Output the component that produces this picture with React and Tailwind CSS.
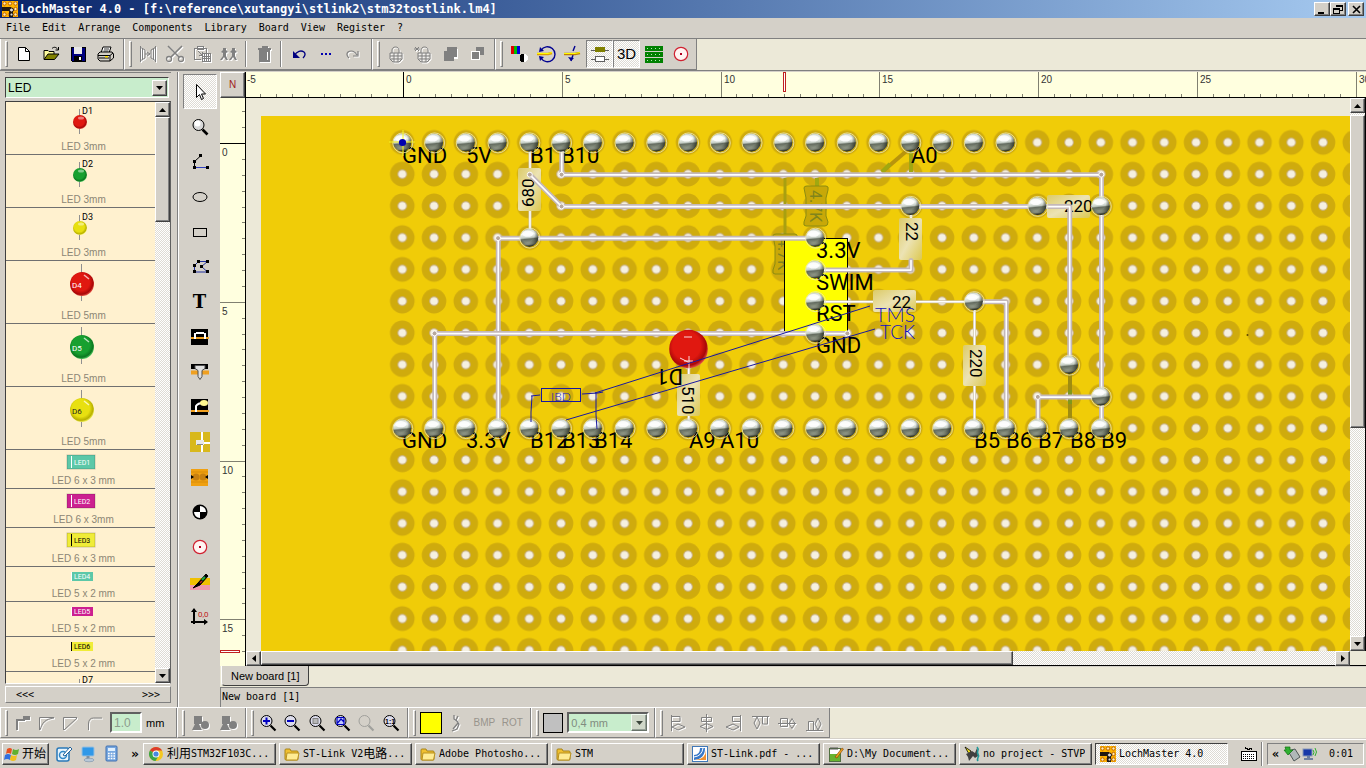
import React from "react";

const MONO = "font-['DejaVu_Sans_Mono','Noto_Sans_CJK_SC',monospace]";
const SANS = "font-['Liberation_Sans',Arial,sans-serif]";
const RAISED =
  "border border-t-white border-l-white border-r-[#404040] border-b-[#404040] bg-[#d4d0c8] shadow-[inset_-1px_-1px_#808080]";
const DITHER = "bg-[repeating-conic-gradient(#ffffff_0_25%,#dedbd4_0_50%)] bg-[length:2px_2px]";

function Icon({ children, size = 20, w, crisp = true }) {
  return (
    <svg
      width={w || size}
      height={size}
      viewBox={`0 0 ${w || size} ${size}`}
      fill="none"
      shapeRendering={crisp ? "crispEdges" : "auto"}
      aria-hidden="true"
      className="shrink-0"
    >
      {children}
    </svg>
  );
}

/* Disabled glyph: grey strokes with a white relief one pixel down and right. */
function Dim({ children, fill = false, size, w, crisp }) {
  return (
    <Icon size={size} w={w} crisp={crisp}>
      <g transform="translate(1 1)" stroke={fill ? "none" : "#fff"} fill={fill ? "#fff" : "none"}>
        {children}
      </g>
      <g stroke={fill ? "none" : "#808080"} fill={fill ? "#808080" : "none"}>{children}</g>
    </Icon>
  );
}

const icons = {
  New: (
    <Icon crisp={false}>
      <path d="M4.500 3.500h7l4 4v9h-11z" fill="#fff" stroke="#000" />
      <path d="M11.500 3.500v4h4" stroke="#000" />
    </Icon>
  ),
  Open: (
    <Icon crisp={false}>
      <path d="M3 15V6.500h4l1 1h5V10" fill="#fffb9c" stroke="#000" />
      <path d="M3 15.500L7 10h11l-4.500 5.500z" fill="#808000" stroke="#000" />
      <path d="M11 4.500c2-2 4-1.500 6 1M17.500 3v3h-3" stroke="#000" />
    </Icon>
  ),
  Save: (
    <Icon>
      <path d="M3 3h14v14H4l-1-1z" fill="#000080" stroke="#000" />
      <rect x="6" y="3" width="8" height="7" fill="#e8e8e8" />
      <rect x="6" y="12" width="8" height="5" fill="#000" />
      <rect x="11" y="13" width="2" height="3" fill="#fff" />
    </Icon>
  ),
  Print: (
    <Icon crisp={false}>
      <path d="M6 9l2-6h8l-2 6z" fill="#fff" stroke="#000" />
      <path d="M9 5h5M8.500 7h5" stroke="#000" strokeWidth=".8" />
      <path d="M3 10l2-2h12l1.500 2v4L15 17H5l-2-2z" fill="#d4d0c8" stroke="#000" />
      <path d="M3 11.500h12M15 11.500V17M15 11.500l3-2.500M4 14h10" stroke="#000" />
      <rect x="10" y="12" width="3" height="1.500" fill="#ffe000" />
    </Icon>
  ),
  Mirror: (
    <Dim crisp={false}>
      <path d="M2.500 2v16M2 3l5 3v8l-5 3M4.500 5v10M17.500 2v16M18 3l-5 3v8l5 3M15.500 5v10M7 10h5M9 8l3 2-3 2" />
    </Dim>
  ),
  Cut: (
    <Dim crisp={false}>
      <path d="M3 2l11 11M17 2L6 13" strokeWidth="1.600" />
      <circle cx="4" cy="15" r="2.500" strokeWidth="1.300" />
      <circle cx="16" cy="15" r="2.500" strokeWidth="1.300" />
    </Dim>
  ),
  Paste: (
    <Dim>
      <path d="M2 4h12v5M2 4v11h7M5 2h6v3H5zM6 7l4 4M10 8v3H7M10 9h8v8h-8zM12 10v7M14 10v7M16 10v7M10 12h8M10 14h8" />
    </Dim>
  ),
  Group: (
    <Dim fill crisp={false}>
      <path d="M4 4h3v2l2 2-2 1v3l2 4H7l-2-3-2 3H1l3-4V9L2 8l2-2zM13 4h3v2l2 2-2 1v3l2 4h-2l-2-3-2 3h-2l3-4V9l-2-1 2-2z" />
    </Dim>
  ),
  Delete: (
    <Dim>
      <path d="M4 5h13M8 3h5v2M5 7h11M6 7v10h9V7M8 8v8M10 8v8M12 8v8" strokeWidth="1.400" />
    </Dim>
  ),
  Undo: (
    <Icon crisp={false}>
      <path d="M5 12c3-5 7-6 10-4 2 2 1 4-1 6" stroke="#000080" strokeWidth="1.300" />
      <path d="M4 7v7h7z" fill="#000080" />
    </Icon>
  ),
  History: (
    <Icon>
      <path d="M5 9h2v2H5zM9 9h2v2H9zM13 9h2v2h-2z" fill="#0000b0" />
    </Icon>
  ),
  Redo: (
    <Dim crisp={false}>
      <path d="M6 14c-2-2-3-4-1-6 3-2 7-1 9 3M15 7v5h-5" strokeWidth="1.200" />
    </Dim>
  ),
  Lock: (
    <Dim crisp={false}>
      <path d="M6 9V6c0-4 7-4 7 0v3M4 9h12v6l-3 3H7l-3-3zM4 12h12M5 15h10M8 9v9M12 9v9" />
    </Dim>
  ),
  Unlock: (
    <Dim crisp={false}>
      <path d="M8 9V6c0-4 7-4 7 0v3M5 9h12v6l-3 3H8l-3-3zM5 12h12M6 15h10M9 9v9M13 9v9M2 3l4 4M6 3L2 7M1 5h6" />
    </Dim>
  ),
  Front: (
    <Icon>
      <path d="M7 4h10v10H7z" fill="#fff" transform="translate(1 1)" />
      <path d="M7 3h10v10h-3v4H4V7h3z" fill="#808080" />
    </Icon>
  ),
  Back: (
    <Icon>
      <path d="M9 3h8v8H9z" fill="#808080" />
      <path d="M4 7h8v8H4z" fill="#808080" stroke="#fff" />
    </Icon>
  ),
  Colors: (
    <Icon>
      <path d="M2 2h3v8H2z" fill="#e00000" />
      <path d="M5 2h3v8H5z" fill="#00c000" />
      <path d="M8 2h3v8H8z" fill="#0000e0" />
      <circle cx="15" cy="14" r="4" fill="#fff" />
      <path d="M15 9.500a4 4 0 0 0 0 9z" fill="#000" />
    </Icon>
  ),
  Rotate: (
    <Icon crisp={false}>
      <path d="M5 6.500A7.500 7.500 0 1 1 5 14" stroke="#000090" strokeWidth="1.400" />
      <path d="M3 8l5-1-4-4zM3 12l5 1-4 4z" fill="#000090" />
      <path d="M1 10h11l4-1" stroke="#e0a000" strokeWidth="2.600" />
      <path d="M1 9.500h11l4-1" stroke="#ff0" />
    </Icon>
  ),
  Flip: (
    <Icon crisp={false}>
      <path d="M12 2l-2 5M10 11l-2 6" stroke="#000090" strokeWidth="1.400" />
      <path d="M5 13l3 4 3-3z" fill="#000090" />
      <path d="M1 10h11l5-1" stroke="#c08000" strokeWidth="2.600" />
      <path d="M1 9.500h11l5-1" stroke="#ff0" />
    </Icon>
  ),
  Parts: (
    <Icon>
      <path d="M1 6h18M1 15h18" stroke="#606060" />
      <rect x="5" y="3" width="10" height="5" fill="#808000" />
      <rect x="5.500" y="12.500" width="9" height="5" fill="#fff" stroke="#606060" />
    </Icon>
  ),
  Copper: (
    <Icon>
      <path d="M1 2h18v5H1zM1 8h18v5H1zM1 14h18v5H1z" fill="#008000" />
      <path d="M3 4h14M3 10h14M3 16h14" stroke="#b8e8b8" strokeDasharray="1 3" />
    </Icon>
  ),
  Target: (
    <Icon crisp={false}>
      <circle cx="10" cy="10" r="6.700" fill="#fff4f2" stroke="#d02030" strokeWidth="1.200" />
      <rect x="9" y="9" width="2" height="2" fill="#b00020" />
    </Icon>
  ),
};

function ToolButton({ name, label, pressed, children }) {
  return (
    <button
      type="button"
      aria-label={label || name}
      className={
        "flex h-7 w-[27px] items-center justify-center " +
        (pressed
          ? "border border-b-white border-l-[#808080] border-r-white border-t-[#808080] " + DITHER
          : "")
      }
    >
      {children || icons[name]}
    </button>
  );
}

function ToolGroup({ children, className = "pr-1" }) {
  return (
    <div
      className={
        "flex items-center border-b border-l border-r border-b-[#808080] border-l-white border-r-[#808080] bg-[#d4d0c8] pl-1 " +
        className
      }
    >
      <span className="mr-0.5 h-[26px] w-[3px] border border-b-[#808080] border-l-white border-r-[#808080] border-t-white" />
      {children}
    </div>
  );
}

function Divider() {
  return <span className="mx-[3px] h-[26px] w-0.5 border-l border-r border-l-[#808080] border-r-white" />;
}

function Arrow({ dir }) {
  const d = {
    up: "M0 4h7L3.500 0z",
    down: "M0 0h7L3.500 4z",
    left: "M4 0v7L0 3.500z",
    right: "M0 0v7l4-3.500z",
  }[dir];
  const tall = dir === "left" || dir === "right";
  return (
    <svg width={tall ? 4 : 7} height={tall ? 7 : 4} aria-hidden="true">
      <path d={d} fill="#000" />
    </svg>
  );
}

function ScrollButton({ dir }) {
  return (
    <button
      type="button"
      aria-label={`Scroll ${dir}`}
      className={`flex h-[15px] w-[15px] shrink-0 items-center justify-center ${RAISED}`}
    >
      <Arrow dir={dir} />
    </button>
  );
}

function TitleBar() {
  const box = `flex h-[14px] w-4 items-center justify-center ${RAISED}`;
  return (
    <header className="flex h-[18px] shrink-0 items-center bg-gradient-to-r from-[#0a246a] to-[#a6caf0] pl-0.5 pr-0.5">
      <BoardLogo />
      <h1 className={`ml-0.5 flex-1 truncate text-[12px] font-bold leading-4 text-white ${MONO}`}>
        LochMaster 4.0 - [f:\reference\xutangyi\stlink2\stm32tostlink.lm4]
      </h1>
      <button type="button" aria-label="Minimize" className={box}>
        <svg width="10" height="9"><path d="M1 7h6v2H1z" /></svg>
      </button>
      <button type="button" aria-label="Restore" className={box}>
        <svg width="10" height="10" fill="none" stroke="#000" shapeRendering="crispEdges">
          <path d="M3.500 3V1.500h6v5H7M3 2h7M.500 4.500h6v5h-6zM0 5h7" />
        </svg>
      </button>
      <button type="button" aria-label="Close" className={`ml-0.5 ${box}`}>
        <svg width="9" height="9" stroke="#000" strokeWidth="1.600"><path d="M1 1l7 7M8 1L1 8" /></svg>
      </button>
    </header>
  );
}

function BoardLogo() {
  return (
    <svg width="16" height="16" viewBox="0 0 16 16" aria-hidden="true" className="shrink-0">
      <rect width="16" height="16" fill="#ffb400" />
      {[2.5, 8, 13.5].map((x) =>
        [2.5, 8, 13.5].map((y) => (
          <circle key={`${x}-${y}`} cx={x} cy={y} r="1.700" fill="#fff0b0" stroke="#c06000" />
        ))
      )}
      <path d="M0 6h9v4H0zM7 8h4v8H7z" fill="#201810" />
      <circle cx="9.500" cy="9" r="2" fill="#ddd" stroke="#201810" />
      <circle cx="9.500" cy="13.500" r="1.500" fill="#ddd" stroke="#201810" />
    </svg>
  );
}

function MenuBar() {
  const items = ["File", "Edit", "Arrange", "Components", "Library", "Board", "View", "Register", "?"];
  return (
    <nav className={`flex h-5 shrink-0 items-center gap-3 bg-[#d4d0c8] pl-1.5 text-[10px] leading-4 ${MONO}`}>
      {items.map((i) => (
        <button type="button" key={i}>{i}</button>
      ))}
    </nav>
  );
}

function TopToolbar() {
  return (
    <div className="flex h-[33px] shrink-0 border-b border-t border-b-[#808080] border-t-[#808080] bg-[#ece9d8]">
      <ToolGroup className="pr-[5px]">
        {["New", "Open", "Save", "Print"].map((n) => <ToolButton key={n} name={n} />)}
      </ToolGroup>
      <ToolGroup className="pr-[5px]">
        {["Mirror", "Cut", "Paste", "Group"].map((n) => <ToolButton key={n} name={n} />)}
        <Divider />
        <ToolButton name="Delete" />
        <Divider />
        {["Undo", "History", "Redo"].map((n) => <ToolButton key={n} name={n} />)}
      </ToolGroup>
      <ToolGroup className="pr-1">
        {["Lock", "Unlock", "Front", "Back"].map((n) => <ToolButton key={n} name={n} />)}
      </ToolGroup>
      <ToolGroup className="pr-0.5">
        {["Colors", "Rotate", "Flip"].map((n) => <ToolButton key={n} name={n} />)}
        <ToolButton name="Parts" pressed />
        <ToolButton name="3D" pressed>
          <span className={`text-[15px] leading-5 ${SANS}`}>3D</span>
        </ToolButton>
        <ToolButton name="Copper" />
        <ToolButton name="Target" />
      </ToolGroup>
    </div>
  );
}

const leds = [
  { kind: "3", tag: "D1", caption: "LED 3mm", fill: "red" },
  { kind: "3", tag: "D2", caption: "LED 3mm", fill: "green" },
  { kind: "3", tag: "D3", caption: "LED 3mm", fill: "yellow" },
  { kind: "5", tag: "D4", caption: "LED 5mm", fill: "red", ink: "#fff" },
  { kind: "5", tag: "D5", caption: "LED 5mm", fill: "green", ink: "#fff" },
  { kind: "5", tag: "D6", caption: "LED 5mm", fill: "yellow", ink: "#222" },
  { kind: "63", tag: "LED1", caption: "LED 6 x 3 mm", color: "#5cc8a8", ink: "#fff" },
  { kind: "63", tag: "LED2", caption: "LED 6 x 3mm", color: "#cc2090", ink: "#fff" },
  { kind: "63", tag: "LED3", caption: "LED 6 x 3 mm", color: "#f0ec38", ink: "#000" },
  { kind: "52", tag: "LED4", caption: "LED 5 x 2 mm", color: "#5cc8a8", ink: "#fff" },
  { kind: "52", tag: "LED5", caption: "LED 5 x 2 mm", color: "#cc2090", ink: "#fff" },
  { kind: "52", tag: "LED6", caption: "LED 5 x 2 mm", color: "#f0ec38", ink: "#000" },
];

const rowHeight = { 3: "h-[53px]", 5: "h-[63px]", 63: "h-[39px]", 52: "h-[35px]" };
const artHeight = { 3: 38, 5: 48, 63: 24, 52: 20 };

function LedArt({ led }) {
  const h = artHeight[led.kind];
  const font = "Roboto,'Liberation Sans',sans-serif";
  return (
    <svg width="60" height={h} className="shrink-0" aria-hidden="true">
      {led.kind === "3" && (
        <>
          <path d="M28.500 7v25" stroke="#909090" />
          <circle cx="29" cy="20" r="7" fill={`url(#led-${led.fill})`} />
          <ellipse cx="30" cy="16" rx="3" ry="1.500" fill="#fff" opacity=".45" />
          <text x="31" y="12" fontSize="9" fontFamily={font}>{led.tag}</text>
        </>
      )}
      {led.kind === "5" && (
        <>
          <path d="M30.500 3v37" stroke="#909090" />
          <circle cx="31" cy="23" r="12" fill={`url(#led-${led.fill})`} />
          <path d="M33 14l5 4" stroke="#fff" strokeWidth="1.500" opacity=".7" />
          <text x="21" y="27" fontSize="8" fill={led.ink} fontFamily={font}>{led.tag}</text>
        </>
      )}
      {led.kind === "63" && (
        <>
          <rect x="16" y="5" width="28" height="14" fill={led.color} stroke="#00000030" />
          <path d="M20.500 6v12" stroke={led.ink} />
          <text x="23" y="15" fontSize="7" fill={led.ink} fontFamily={font}>{led.tag}</text>
        </>
      )}
      {led.kind === "52" && (
        <>
          <rect x="20" y="5" width="22" height="9" fill={led.color} />
          <path d="M20.500 5v9" stroke={led.ink} />
          <text x="23" y="12" fontSize="7" fill={led.ink} fontFamily={font}>{led.tag}</text>
        </>
      )}
    </svg>
  );
}

function LibraryPanel() {
  return (
    <aside className="flex w-[179px] shrink-0 flex-col border-r border-r-white bg-[#d4d0c8] pr-1 shadow-[inset_-1px_0_#808080]">
      <div className="ml-[5px] mr-[3px] flex min-h-0 flex-1 flex-col border-t border-t-[#808080] pt-1">
        <div className="mr-0.5 flex h-[21px] items-center border border-b-white border-l-[#404040] border-r-white border-t-[#404040] bg-[#c8edcc] pr-px">
          <select
            aria-label="Library"
            className={`h-full min-w-0 flex-1 appearance-none bg-transparent pl-0.5 text-[12px] leading-4 outline-none ${SANS}`}
          >
            <option>LED</option>
          </select>
          <span className={`flex h-4 w-[15px] items-center justify-center ${RAISED}`}>
            <Arrow dir="down" />
          </span>
        </div>
        <div className="mt-[3px] flex min-h-0 flex-1 border border-b-white border-l-[#404040] border-r-[#606060] border-t-[#404040]">
          <ul className="min-w-0 flex-1 overflow-hidden bg-[#fff1cf]">
            {leds.map((led) => (
              <li
                key={led.tag}
                className={`flex flex-col items-center justify-between border-b border-b-[#707070] ${rowHeight[led.kind]}`}
              >
                <LedArt led={led} />
                <span className={`pl-1.5 text-[10px] leading-[14px] text-[#8c8675] ${SANS}`}>{led.caption}</span>
              </li>
            ))}
            <li className="flex flex-col items-center">
              <svg width="60" height="24" aria-hidden="true">
                <path d="M28.500 7v10" stroke="#909090" />
                <text x="31" y="11" fontSize="9" fontFamily="Roboto,'Liberation Sans',sans-serif">D7</text>
              </svg>
            </li>
          </ul>
          <div className={`flex w-[15px] flex-col ${DITHER}`}>
            <ScrollButton dir="up" />
            <div className={`h-[105px] ${RAISED}`} />
            <div className="flex-1" />
            <ScrollButton dir="down" />
          </div>
        </div>
        <div className={`mb-1 mt-0.5 flex h-[17px] shrink-0 items-center justify-between border border-b-[#808080] border-l-white border-r-[#808080] border-t-white px-2.5 text-[10px] leading-3 ${MONO}`}>
          <button type="button">&lt;&lt;&lt;</button>
          <button type="button">&gt;&gt;&gt;</button>
        </div>
      </div>
    </aside>
  );
}

const dot = (x, y) => <rect key={`${x},${y}`} x={x - 1.5} y={y - 1.5} width="3" height="3" fill="#000" />;

const palette = [
  ["Select", <Icon crisp={false}><path d="M6.500 2.500v13l3-3 2 5 2-1-2-4.500h4z" fill="#fff" stroke="#000" /></Icon>],
  ["Zoom", (
    <Icon crisp={false}>
      <circle cx="8.500" cy="8" r="5.500" fill="#d8d8d8" stroke="#000" />
      <circle cx="7.500" cy="6.500" r="3" fill="#fff" />
      <path d="M12.500 12.500l5 5" stroke="#000" strokeWidth="2.600" />
    </Icon>
  )],
  ["Polyline", (
    <Icon crisp={false}>
      <path d="M10.500 4L4.500 9.500V16" stroke="#000" />
      <path d="M5 15.500h12" stroke="#3040c0" />
      {dot(10.5, 3.5)}{dot(4.5, 9.5)}{dot(4.5, 15.5)}{dot(17.5, 15.5)}
    </Icon>
  )],
  ["Ellipse", <Icon crisp={false}><ellipse cx="10" cy="10" rx="7" ry="4.500" stroke="#000" /></Icon>],
  ["Rectangle", <Icon><rect x="3.500" y="6.500" width="13" height="8" stroke="#000" /></Icon>],
  ["Polygon", (
    <Icon crisp={false}>
      <path d="M8.500 4.500h9l-6 5 6 5.500h-13V8.500z" stroke="#2030a0" />
      {dot(8.5, 4.5)}{dot(17.5, 4.5)}{dot(11.5, 9.5)}{dot(17.5, 14.5)}{dot(4.5, 14.5)}{dot(4.5, 8.5)}
    </Icon>
  )],
  ["Text", null],
  ["Bridge", (
    <Icon>
      <path d="M1 2h17v16H1z" fill="#000" />
      <path d="M1 11h18" stroke="#f0a020" strokeWidth="2" />
      <path d="M5 12V7l2-1h6l2 1v5" stroke="#fff" strokeWidth="2" />
    </Icon>
  )],
  ["Pin", (
    <Icon crisp={false}>
      <path d="M1 2h17v5H1z" fill="#000" />
      <path d="M1 10.500h18" stroke="#f0a020" strokeWidth="4" />
      <path d="M5 3.500h10v3l-3 2v6l-2 3-2-3v-6l-3-2z" fill="#e0e0e0" stroke="#505050" />
    </Icon>
  )],
  ["Solder", (
    <Icon crisp={false}>
      <path d="M1 2h17v16H1z" fill="#000" />
      <path d="M1 14h18" stroke="#f0a020" strokeWidth="2" />
      <path d="M6 15V9c2-3 5-3 7-3" stroke="#fff" strokeWidth="2" />
      <ellipse cx="14" cy="6" rx="4" ry="3" fill="#fff890" />
    </Icon>
  )],
  ["Cut wire", (
    <Icon>
      <rect width="20" height="20" fill="#d8b81c" />
      <path d="M12 0v20M12 11h8" stroke="#fff" strokeWidth="2" />
      <path d="M6 8h8v5H6z" fill="#e8e8e8" />
      <path d="M7 12h6" stroke="#888" />
    </Icon>
  )],
  ["Track cut", (
    <Icon crisp={false}>
      <rect x="1" y="2" width="17" height="17" fill="#f0a010" />
      <circle cx="6" cy="10" r="3.500" fill="#c88010" />
      <circle cx="13" cy="10" r="3.500" fill="#c88010" />
      <path d="M1 5h17M1 15h17" stroke="#d88c08" />
      <path d="M1 8l3 2-3 2zM18 8l-3 2 3 2z" fill="#000" />
    </Icon>
  )],
  ["Mark", (
    <Icon crisp={false}>
      <circle cx="10" cy="10" r="7.500" fill="#000" />
      <path d="M10 10V4a6 6 0 0 1 6 6zM10 10v6a6 6 0 0 1-6-6z" fill="#fff" />
    </Icon>
  )],
  ["Drill", icons.Target],
  ["Probe", (
    <Icon crisp={false}>
      <path d="M0 6h20v7H0z" fill="#f0c000" />
      <path d="M0 13h20v5H0z" fill="#f098a8" />
      <path d="M3 16L8 11 16 2l2 2-8 9z" fill="#000" stroke="#000" />
      <path d="M12 8l3-3" stroke="#20b040" strokeWidth="2" />
      <path d="M10 11l2-2" stroke="#c02020" strokeWidth="1.500" />
    </Icon>
  )],
  ["Origin", (
    <Icon crisp={false}>
      <path d="M4 2v15M1 15h16" stroke="#000" strokeWidth="2" />
      <path d="M1 5l3-4 3 4zM14 12l4 3-4 3z" fill="#000" />
      <text x="8" y="10" fontSize="8" fill="#c02020" fontFamily="Roboto,'Liberation Sans',sans-serif">0,0</text>
    </Icon>
  )],
];

function Palette() {
  return (
    <div className="flex w-[41px] shrink-0 flex-col items-center bg-[#d4d0c8] pt-0.5">
      {palette.map(([name, art], i) => (
        <button
          type="button"
          key={name}
          aria-label={name}
          className={
            "flex h-[35px] w-[34px] shrink-0 items-center justify-center " +
            (i === 0 ? "border border-b-white border-l-[#808080] border-r-white border-t-[#808080] " + DITHER : "")
          }
        >
          {art || (
            <span className="font-['DejaVu_Serif','Liberation_Serif',serif] text-[18px] font-bold leading-5">T</span>
          )}
        </button>
      ))}
    </div>
  );
}

const PITCH = 31.75;
const colX = (c) => 402.3 + c * PITCH;
const rowY = (r) => 142.4 + r * PITCH;

function TopRuler() {
  const ticks = Array.from({ length: 120 }, (_, i) => i);
  return (
    <svg className="h-[26px] min-w-0 flex-1 border-b border-b-black bg-[#ffffdf]" shapeRendering="crispEdges">
      {ticks.map((i) => {
        const x = Math.round(157 - 5 * PITCH + (i * PITCH) / 2);
        const major = i % 10 === 0;
        return (
          <g key={i}>
            <path d={`M${x}.5 ${major ? 0 : 22}V26`} stroke={i === 10 ? "#000" : "#808070"} />
            {major && (
              <text x={x + 3} y="11" fontSize="10" fill="#333" fontFamily="'Liberation Sans',sans-serif">
                {i / 2 - 5}
              </text>
            )}
          </g>
        );
      })}
      <rect x="537.5" y="0.500" width="2" height="19" fill="#fff" stroke="#c02020" />
    </svg>
  );
}

function SideRuler() {
  const ticks = Array.from({ length: 50 }, (_, i) => i - 2);
  return (
    <svg className="w-[26px] shrink-0 border-r border-r-black bg-[#ffffdf]" shapeRendering="crispEdges">
      {ticks.map((i) => {
        const y = Math.round(45 + (i * PITCH) / 2);
        const major = i >= 0 && i % 10 === 0;
        return (
          <g key={i}>
            <path d={`M${major ? 0 : 22} ${y}.5H26`} stroke={i === 0 ? "#000" : "#808070"} />
            {major && (
              <text x="2" y={y + 13} fontSize="10" fill="#333" fontFamily="'Liberation Sans',sans-serif">
                {i / 2}
              </text>
            )}
          </g>
        );
      })}
      <rect x="0.500" y="552.5" width="19" height="2" fill="#fff" stroke="#c02020" />
    </svg>
  );
}

const wires = [
  [[5, 0], [5, 1], [22, 1], [22, 9]],
  [[4, 1], [5, 2], [21, 2], [21, 7]],
  [[3, 9], [3, 3], [13, 3]],
  [[1, 9], [1, 6], [14, 6]],
  [[13, 4], [16, 4], [16, 3.7]],
  [[18, 5], [19, 5], [19, 9]],
  [[22, 8], [20, 8], [20, 9]],
];
const leads = [
  [[4, 0], [4, 3]],
  [[16, 2], [16, 4]],
  [[13, 5], [18, 5]],
  [[18, 5], [18, 9]],
  [[20, 2], [22, 2]],
  [[9, 7], [9, 9]],
];
const joints = [
  ...Array.from({ length: 20 }, (_, c) => [c, 0]),
  ...Array.from({ length: 23 }, (_, c) => [c, 9]),
  [4, 3], [13, 3], [13, 4], [13, 5], [13, 6], [16, 2], [20, 2], [22, 2], [18, 5], [21, 7], [22, 8],
];
const eyelets = [[5, 1], [4, 1], [5, 2], [22, 1], [20, 8], [14, 6], [3, 3], [1, 6]];
const labels = [
  ["GND", 402, 163], ["5V", 466, 163], ["B11", 530, 163], ["B10", 561, 163], ["A0", 911, 163],
  ["GND", 402, 448], ["3.3V", 466, 448], ["B12", 530, 448], ["B13", 562, 448], ["B14", 594, 448],
  ["A9", 689, 448], ["A10", 720, 448], ["B5", 974, 448], ["B6", 1006, 448], ["B7", 1038, 448],
  ["B8", 1070, 448], ["B9", 1101, 448],
  ["3.3V", 816, 258], ["SWIM", 816, 290], ["RST", 816, 321], ["GND", 816, 353],
];
const resistors = [
  { x: 518, y: 168, w: 23, h: 43, value: "680", tx: 534, ty: 207, turn: -90 },
  { x: 899, y: 218, w: 23, h: 42, value: "22", tx: 906, ty: 222, turn: 90 },
  { x: 873, y: 290, w: 43, h: 22, value: "22", tx: 892, ty: 308, turn: 0 },
  { x: 963, y: 345, w: 23, h: 41, value: "220", tx: 970, ty: 349, turn: 90 },
  { x: 1047, y: 195, w: 43, h: 23, value: "220", tx: 1064, ty: 212, turn: 0 },
  { x: 677, y: 374, w: 23, h: 42, value: "510", tx: 682, ty: 386, turn: 90 },
];
const toPath = (pts) => "M" + pts.map(([c, r]) => `${colX(c) + 0.7} ${rowY(r) + 0.7}`).join("L");

function BoardDrawing() {
  const face = "Roboto,'Liberation Sans',sans-serif";
  return (
    <svg className="min-w-0 flex-1 bg-[#ece9d8]" role="img" aria-label="Stripboard layout">
      <defs>
        <pattern id="holes" x={colX(0) - PITCH / 2} y={rowY(0) - PITCH / 2} width={PITCH} height={PITCH} patternUnits="userSpaceOnUse">
          <circle cx={PITCH / 2} cy={PITCH / 2} r="12.300" fill="#cfab0d" />
          <circle cx={PITCH / 2} cy={PITCH / 2} r="4.300" fill="#f5f0e0" stroke="#c8b088" />
        </pattern>
        <linearGradient id="ball" x1=".4" y1="0" x2=".5" y2="1">
          <stop offset="0" stopColor="#c8d0c8" />
          <stop offset=".3" stopColor="#f4f8f4" />
          <stop offset=".5" stopColor="#c4ccc4" />
          <stop offset=".58" stopColor="#646c60" />
          <stop offset=".72" stopColor="#808878" />
          <stop offset=".88" stopColor="#c0c8b8" />
          <stop offset="1" stopColor="#343828" />
        </linearGradient>
        <radialGradient id="shade" cx=".38" cy=".35" r=".66">
          <stop offset=".6" stopColor="#202418" stopOpacity="0" />
          <stop offset="1" stopColor="#202418" stopOpacity=".75" />
        </radialGradient>
        <linearGradient id="body" x1="0" y1="0" x2="1" y2="1">
          <stop offset="0" stopColor="#dccb68" />
          <stop offset=".5" stopColor="#ece3b4" />
          <stop offset="1" stopColor="#dcc850" />
        </linearGradient>
        <g id="joint">
          <circle cx=".5" cy=".5" r="10" fill="none" stroke="#ece8b8" strokeWidth=".8" />
          <circle r="9" fill="url(#ball)" />
          <ellipse cx="-1.500" cy="-4" rx="5.500" ry="3.200" fill="#fff" opacity=".85" />
          <circle r="9" fill="url(#shade)" />
        </g>
      </defs>
      <g transform="translate(-246 -98)">
        <rect x="261" y="116" width="3000" height="3000" fill="#f0cc08" />
        <rect x={colX(0) - PITCH / 2} y={rowY(0) - PITCH / 2} width="3000" height="3000" fill="url(#holes)" />

        <g fill="none" strokeWidth="4">
          <path d="M910 148L882 172" stroke="#b8940c" />
          <path d="M882 172l8-8M911 150v22M817 178v10" stroke="#a0a810" />
          <path d="M785 178v60" stroke="#a8a010" strokeWidth="3" />
          <path d="M1070 372v52" stroke="#a08c10" />
          <path d="M1070 390v14" stroke="#80981c" />
        </g>
        <g fill="#c8a808" stroke="#8c8c10">
          <path d="M804 188q0-2 3-2h19q3 0 2 4l-2 8v18l2 6q0 4-3 4h-19q-3 0-2-4l2-6v-18z" />
          <path d="M773 236q0-2 3-2h19q3 0 2 4l-2 8v18l2 6q0 4-3 4h-19q-3 0-2-4l2-6v-18z" />
        </g>
        <g fontFamily={face} fontSize="16" fill="#80841c">
          <text transform="translate(810 190) rotate(90)">4.7K</text>
          <text transform="translate(778 238) rotate(90)">4.7K</text>
        </g>

        <rect x="784.5" y="238.500" width="63" height="94" fill="#ffff00" stroke="#000" />

        {leads.map((p, i) => (
          <g key={i} fill="none">
            <path d={toPath(p)} stroke="#d0c4a8" strokeWidth="3" />
            <path d={toPath(p)} stroke="#fff" strokeWidth="1.500" />
          </g>
        ))}
        {resistors.map((r) => (
          <g key={`${r.x}-${r.y}`}>
            <rect x={r.x} y={r.y} width={r.w} height={r.h} rx="2" fill="url(#body)" />
            <text
              transform={`translate(${r.tx} ${r.ty}) rotate(${r.turn})`}
              fontFamily={face}
              fontSize="17"
            >
              {r.value}
            </text>
          </g>
        ))}
        <g fontFamily={face} fontSize="22">
          {labels.map(([t, x, y]) => (
            <text key={`${t}${x}${y}`} x={x} y={y}>{t}</text>
          ))}
        </g>

        {wires.map((p, i) => (
          <g key={i} fill="none" strokeLinejoin="round" strokeLinecap="round">
            <path d={toPath(p)} stroke="#c4b8b8" strokeWidth="5" />
            <path d={toPath(p)} stroke="#fff" strokeWidth="1.600" />
          </g>
        ))}
        {eyelets.map(([c, r]) => (
          <circle key={`${c},${r}`} cx={colX(c) + 0.5} cy={rowY(r) + 0.5} r="2.500" fill="#b8a89c" stroke="#fff" />
        ))}
        {joints.map(([c, r]) => (
          <use key={`${c},${r}`} href="#joint" x={colX(c)} y={rowY(r)} />
        ))}

        <circle cx="688.500" cy="349" r="19.300" fill="url(#led-red)" />
        <path d="M684 337h8M680 358l8 4M689 356v12M684 361h9" stroke="#fff" opacity=".85" fill="none" />
        <text transform="translate(683 369) rotate(180)" fontFamily={face} fontSize="22">D1</text>

        <path d="M389 142h26M403 130v26" stroke="#f8f820" />
        <circle cx="402.500" cy="142.500" r="3.600" fill="#0000b0" />

        <g fill="none" stroke="#1818a0">
          <rect x="541.500" y="388.500" width="39" height="13" />
          <path d="M582 394l16-1 5-1M595 393L870 306M566 420L875 329M540 395l-9 1M532 396l-1 16v10M596 392v23l1 14" />
        </g>
        <g fill="#1010c0" fontFamily="Lato,'Liberation Sans',sans-serif" fontWeight="300">
          <text x="551" y="401" fontSize="12">IBD</text>
          <text x="875" y="322" fontSize="20">TMS</text>
          <text x="880" y="339" fontSize="19">TCK</text>
        </g>
        <circle cx="1247.500" cy="335" r="1" fill="#604800" />
      </g>
    </svg>
  );
}

function Workspace() {
  return (
    <main className="flex min-w-0 flex-1 flex-col bg-[#ece9d8]">
      <div className="flex shrink-0">
        <button
          type="button"
          className={`w-[25px] shrink-0 text-[10px] leading-4 text-[#a02020] ${RAISED} ${SANS}`}
        >
          N
        </button>
        <span className="w-px bg-black" />
        <TopRuler />
      </div>
      <div className="flex min-h-0 flex-1">
        <SideRuler />
        <div className="flex min-w-0 flex-1 flex-col border-b border-b-black">
          <div className="flex min-h-0 flex-1">
            <BoardDrawing />
            <div className={`flex w-4 shrink-0 flex-col border-r border-r-black ${DITHER}`}>
              <ScrollButton dir="up" />
              <div className="flex min-h-0 flex-1 flex-col pt-0.5">
                <div className={`h-[60%] ${RAISED}`} />
              </div>
              <ScrollButton dir="down" />
            </div>
          </div>
          <div className={`mr-4 flex h-[14px] shrink-0 items-center ${DITHER}`}>
            <ScrollButton dir="left" />
            <div className="flex h-full flex-1">
              <div className={`w-[70%] ${RAISED}`} />
            </div>
            <ScrollButton dir="right" />
          </div>
        </div>
      </div>
      <div className="flex h-[21px] shrink-0 items-start">
        <button
          type="button"
          className={`ml-px h-5 rounded-b-sm border border-t-0 border-b-[#404040] border-l-white border-r-[#404040] bg-[#d4d0c8] px-[9px] text-[11px] leading-[20px] ${SANS}`}
        >
          New board [1]
        </button>
        <span className="h-px flex-1 bg-[#d4d0c8]" />
      </div>
      <div className={`h-5 shrink-0 border-l border-t border-l-[#808080] border-t-[#808080] bg-[#d4d0c8] pl-px text-[10px] leading-[18px] ${MONO}`}>
        New board [1]
      </div>
    </main>
  );
}

function ZoomIcon({ ring = "#000", lens = "#dcdcec", children }) {
  return (
    <Icon crisp={false}>
      <circle cx="8.500" cy="8" r="5.500" fill={lens} stroke={ring} />
      <path d="M12.500 12.500l5 5" stroke={ring} strokeWidth="2.200" />
      {children}
    </Icon>
  );
}

function Slot({ label, width = "w-6", children }) {
  return (
    <button type="button" aria-label={label} className={`flex h-7 items-center justify-center ${width}`}>
      {children}
    </button>
  );
}

function BottomToolbar() {
  const aligns = {
    "Align left": "M2.500 2v16M3 3.500h8v5H3M3 14l6-3 7 3-7 3z",
    "Align center": "M10.500 1v18M5.500 4.500h10v4h-10zM4 13.500l6.500-3 6.500 3-6.500 3z",
    "Align right": "M17.500 2v16M9 3.500h8M9.500 3.500v5H17M3 14l7-3 6 3-6 3z",
    "Align top": "M2 3.500h17M4 10l3-6 3 6-3 6zM12.500 4v7h5V4",
    "Align middle": "M1 10.500h18M3.500 5.500h7v8h-7zM12 10.500l3-5 3 5-3 5z",
    "Align bottom": "M2 17.500h17M4.500 17V8.500h5V17M11 11l3-6 3 6-3 6z",
  };
  return (
    <div className="flex h-[31px] shrink-0 border-t border-t-white bg-[#ece9d8]">
      <ToolGroup className="pr-3">
        <Slot label="Right angle">
          <Dim fill><path d="M4 6h9v2H6v9H4zM11 3h7v4h-7z" /></Dim>
        </Slot>
        <Slot label="Large arc">
          <Dim crisp={false}><path d="M3.500 17V4.500H18M4 17C6 10 9 6 18 5" /></Dim>
        </Slot>
        <Slot label="Diagonal">
          <Dim crisp={false}><path d="M3.500 17V4.500H17M4 17L17 5" /></Dim>
        </Slot>
        <Slot label="Small arc">
          <Dim crisp={false}><path d="M4.500 17v-6q0-6 5-6H18" /></Dim>
        </Slot>
        <input
          aria-label="Width"
          defaultValue="1.0"
          className={`ml-1 h-[21px] w-8 border-2 border-b-white border-l-[#606060] border-r-white border-t-[#606060] bg-[#c8edcc] px-0.5 text-[12px] leading-4 text-[#8c9c8c] outline-none ${SANS}`}
        />
        <span className={`ml-1 text-[11px] leading-4 ${SANS}`}>mm</span>
      </ToolGroup>
      <ToolGroup className="pr-0.5">
        {["Group parts", "Ungroup parts"].map((n) => (
          <Slot key={n} label={n} width="w-7">
            <Dim fill crisp={false}><path d="M3 3h8v8H8l3 6H1l3-6H3z" /><circle cx="14" cy="12" r="4" /></Dim>
          </Slot>
        ))}
      </ToolGroup>
      <ToolGroup className="pr-1">
        <Slot label="Zoom in"><ZoomIcon><path d="M5 8h7M8.500 4.500v7" stroke="#0000c0" strokeWidth="2" /></ZoomIcon></Slot>
        <Slot label="Zoom out"><ZoomIcon><path d="M5 8h7" stroke="#0000c0" strokeWidth="2" /></ZoomIcon></Slot>
        <Slot label="Zoom selection" width="w-[25px]"><ZoomIcon><rect x="6" y="5.500" width="5" height="5" fill="#b8b8b8" stroke="#808080" /></ZoomIcon></Slot>
        <Slot label="Zoom board" width="w-[25px]"><ZoomIcon><path d="M5 4.500h7v7H5zM5.500 10l3.500-4 3 3" fill="#c0c8ff" stroke="#0000c0" strokeWidth="1.200" /></ZoomIcon></Slot>
        <Slot label="Zoom previous"><ZoomIcon ring="#a0a09c" lens="#d4d0c8" /></Slot>
        <Slot label="Zoom one to one" width="w-[25px]">
          <ZoomIcon>
            <text x="4" y="11" fontSize="7" fontWeight="bold" fill="#000" fontFamily="'Liberation Sans',sans-serif">1:1</text>
          </ZoomIcon>
        </Slot>
      </ToolGroup>
      <ToolGroup className="pr-1">
        <button type="button" aria-label="Fill colour" className="ml-0.5 h-[22px] w-[22px] border border-black bg-[#ffff00]" />
        <Slot label="Brush" width="w-7"><Dim crisp={false}><path d="M8 2v4l4 3M12 3l-2 4M10 7l3 4-2 5-5 2M7 16l5-6" strokeWidth="1.300" /></Dim></Slot>
        <button type="button" className={`w-7 text-[10px] leading-4 text-[#98948c] ${SANS}`}>BMP</button>
        <button type="button" className={`w-7 text-[10px] leading-4 text-[#98948c] ${SANS}`}>ROT</button>
      </ToolGroup>
      <ToolGroup className="pr-[5px]">
        <button type="button" aria-label="Line colour" className="ml-0.5 h-5 w-5 border border-black bg-[#c0c0c0]" />
        <div className="ml-1 flex h-[21px] w-[82px] items-center border-2 border-b-white border-l-[#606060] border-r-white border-t-[#606060] bg-[#c8edcc]">
          <select
            aria-label="Line width"
            className={`h-full min-w-0 flex-1 appearance-none bg-transparent pl-0.5 text-[11px] leading-4 text-[#808c80] outline-none ${SANS}`}
          >
            <option>0,4 mm</option>
          </select>
          <span className={`flex h-[17px] w-4 items-center justify-center opacity-70 ${RAISED}`}>
            <Arrow dir="down" />
          </span>
        </div>
      </ToolGroup>
      <ToolGroup className="pr-0.5">
        {Object.entries(aligns).map(([n, d]) => (
          <Slot key={n} label={n} width="w-[27px]"><Dim crisp={false}><path d={d} /></Dim></Slot>
        ))}
      </ToolGroup>
    </div>
  );
}

const Folder = (
  <Icon size={16} crisp={false}>
    <path d="M1 4q0-1 1-1h4l1 2h6q1 0 1 1v7q0 1-1 1H2q-1 0-1-1z" fill="#f0c030" stroke="#a88418" />
    <path d="M3 7h12l-1.500 7H2z" fill="#ffec94" stroke="#b89020" />
  </Icon>
);
const Chrome = (
  <Icon size={16} crisp={false}>
    <circle cx="8" cy="8" r="7" fill="#f4c820" />
    <path d="M8 8L1.900 4.500A7 7 0 0 1 14.100 4.500H8z" fill="#dc3c2c" />
    <path d="M8 8L1.900 4.500A7 7 0 0 0 7.500 15l3-5z" fill="#3ca448" />
    <circle cx="8" cy="8" r="3.500" fill="#fff" />
    <circle cx="8" cy="8" r="2.600" fill="#4888e0" />
  </Icon>
);
const Reader = (
  <Icon size={16} crisp={false}>
    <rect x=".5" y=".5" width="15" height="15" fill="#fff" stroke="#4078b8" />
    <path d="M2 9q6 0 6-7h5q0 11-11 12z" fill="#3878c8" />
    <path d="M3 14Q14 13 14 4v10z" fill="#f09030" />
    <path d="M2 11Q10 10 11 2" stroke="#fff" />
  </Icon>
);
const Notes = (
  <Icon size={16} crisp={false}>
    <rect x="1.500" y="2.500" width="11" height="13" fill="#fff" stroke="#507040" />
    <path d="M2 8h10v7H2z" fill="#68b430" />
    <path d="M3 1v3M5 1v3M7 1v3M9 1v3" stroke="#555" />
    <path d="M7 11l7-9 1.500 1L9 12z" fill="#f0a020" stroke="#804000" strokeWidth=".6" />
  </Icon>
);
const Butterfly = (
  <Icon size={16} crisp={false}>
    <path d="M1 1l6 4-2 3z" fill="#f0e020" stroke="#000" strokeWidth=".8" />
    <path d="M2 8l6-3 3 2 2-5 1 8-3 2-2-2-4 5-1-4z" fill="#404040" />
    <path d="M13 1c3 3-1 4 1 7s-2 4 0 7" stroke="#209898" strokeWidth="1.600" />
  </Icon>
);

const tasks = [
  { icon: Chrome, cjk: "利用", text: "STM32F103C..." },
  { icon: Folder, text: "ST-Link V2", after: "电路", tail: "..." },
  { icon: Folder, text: "Adobe Photosho..." },
  { icon: Folder, text: "STM" },
  { icon: Reader, text: "ST-Link.pdf - ..." },
  { icon: Notes, text: "D:\\My Document..." },
  { icon: Butterfly, text: "no project - STVP" },
  { icon: <BoardLogo />, text: "LochMaster 4.0", active: true },
];

function Taskbar() {
  return (
    <footer className={`flex h-[30px] shrink-0 items-center border-t border-t-[#d4d0c8] bg-[#d4d0c8] pl-0.5 pr-0.5 text-[10px] leading-4 shadow-[inset_0_1px_#ffffff] ${MONO}`}>
      <button type="button" className={`flex h-[22px] w-[47px] items-center gap-px pl-px text-[12px] ${RAISED}`}>
        <svg width="17" height="16" viewBox="0 0 17 16" aria-hidden="true" className="shrink-0">
          <path d="M3 3q3-2 5 0L7 8Q4 6 2 8z" fill="#e85020" />
          <path d="M9 3q3 2 6 0l-1 5q-3 2-6 0z" fill="#60b030" />
          <path d="M1 9q3-2 6 0l-1 5q-3-2-6 0z" fill="#3070e0" />
          <path d="M7 9q3 2 6 0l-1 5q-3 2-6 0z" fill="#f0c020" />
        </svg>
        <span className="whitespace-nowrap">开始</span>
      </button>
      <div className="flex w-[94px] items-center gap-1.5 pl-1.5">
        <button type="button" aria-label="Desktop">
          <Icon size={18} crisp={false}>
            <rect x="2" y="3" width="12" height="13" rx="2" fill="#e8f4fc" stroke="#2878b8" strokeWidth="1.500" />
            <circle cx="8" cy="10" r="3.500" stroke="#3088c8" strokeWidth="1.500" />
            <path d="M8 10l7-8 2 2-7 7z" fill="#fff" stroke="#206098" />
          </Icon>
        </button>
        <button type="button" aria-label="Display">
          <Icon size={18} crisp={false}>
            <rect x="3" y="2" width="12" height="9" rx="1" fill="#3098e8" stroke="#98c0e0" />
            <path d="M9 11v3" stroke="#8090a0" strokeWidth="3" />
            <ellipse cx="10" cy="15" rx="5" ry="1.800" fill="#b8c8d8" stroke="#7890a8" strokeWidth=".6" />
          </Icon>
        </button>
        <button type="button" aria-label="Calculator">
          <Icon size={18} crisp={false}>
            <rect x="3" y="1" width="11" height="15" rx="1" fill="#78a8e0" stroke="#4070b0" />
            <rect x="5" y="3" width="7" height="3" fill="#e0f0ff" />
            <path d="M5 8.500h7M5 11h7M5 13.500h7" stroke="#fff" strokeWidth="1.500" strokeDasharray="1.700 1" />
          </Icon>
        </button>
        <span className="ml-1 text-[13px] font-bold leading-3">»</span>
      </div>
      <div className="flex min-w-0 flex-1 gap-[3px]">
        {tasks.map((t) => (
          <button
            type="button"
            key={t.text}
            className={
              "flex h-[22px] min-w-0 max-w-[133px] flex-1 items-center gap-[3px] whitespace-nowrap pl-1 " +
              (t.active
                ? "border border-b-white border-l-[#404040] border-r-white border-t-[#404040] " + DITHER
                : RAISED)
            }
          >
            {t.icon}
            <span className="flex items-center overflow-hidden">
              {t.cjk && <span className="text-[12px]">{t.cjk}</span>}
              <span className="whitespace-pre">{t.text}</span>
              {t.after && <span className="text-[12px]">{t.after}</span>}
              {t.tail}
            </span>
          </button>
        ))}
      </div>
      <button type="button" aria-label="Input method" className="ml-2.5 mr-1">
        <Icon size={16}>
          <path d="M4 1v1h2v1h2V2h2v2" stroke="#000" />
          <rect x="0.500" y="5.500" width="15" height="9" fill="#fff" stroke="#000" />
          <path d="M2 8h12M2 10h12M2 12h12" stroke="#000" strokeDasharray="1 1" />
        </Icon>
      </button>
      <span className="mr-1 h-6 w-0.5 border-l border-r border-l-[#808080] border-r-white" />
      <div className="flex h-[22px] w-[97px] items-center border border-b-white border-l-[#808080] border-r-white border-t-[#808080] pl-1">
        <span className="mr-1 text-[12px] font-bold leading-3">«</span>
        <Icon size={18} crisp={false}>
          <path d="M5 6l7-2 5 8-6 4z" fill="#b0b8b8" stroke="#505858" />
          <path d="M2 2h5v3h3l-5 5-4-5h2z" fill="#30b030" stroke="#107010" strokeWidth=".7" />
        </Icon>
        <Icon size={18} crisp={false}>
          <rect x="2" y="4" width="9" height="7" fill="#1838a8" stroke="#8898b8" />
          <path d="M3 14h9M6 12h3" stroke="#7080a0" strokeWidth="2" />
          <path d="M12 5q2 2 0 5M14 3q3 4 0 8" stroke="#30b030" />
        </Icon>
        <time className="ml-auto mr-2.5">0:01</time>
      </div>
    </footer>
  );
}

function LedGradients() {
  const colors = {
    red: ["#f06050", "#e01810", "#a80808"],
    green: ["#60d870", "#18a030", "#0c7820"],
    yellow: ["#fcfc70", "#e8e010", "#b8b000"],
  };
  return (
    <svg width="0" height="0" className="absolute" aria-hidden="true">
      <defs>
        {Object.entries(colors).map(([name, c]) => (
          <radialGradient key={name} id={`led-${name}`} cx=".45" cy=".42" r=".6">
            <stop offset="0" stopColor={c[1]} />
            <stop offset=".6" stopColor={c[1]} />
            <stop offset=".85" stopColor={c[2]} />
            <stop offset="1" stopColor={c[0]} />
          </radialGradient>
        ))}
      </defs>
    </svg>
  );
}

export default function App() {
  return (
    <div className="flex h-screen flex-col overflow-hidden bg-[#d4d0c8] text-black">
      <LedGradients />
      <TitleBar />
      <MenuBar />
      <TopToolbar />
      <div className="flex min-h-0 flex-1 pt-px">
        <LibraryPanel />
        <Palette />
        <Workspace />
      </div>
      <BottomToolbar />
      <Taskbar />
    </div>
  );
}
